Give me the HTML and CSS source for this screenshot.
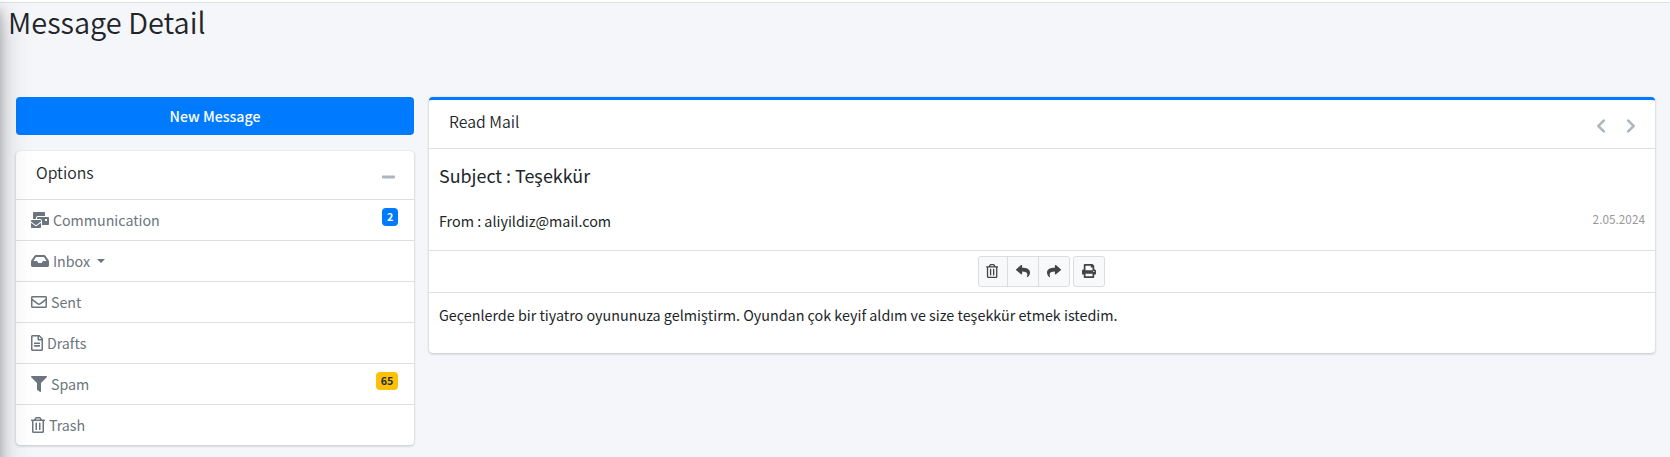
FILE: index.html
```html
<!DOCTYPE html>
<html lang="tr">
<head>
<meta charset="utf-8">
<title>Message Detail</title>
<link rel="stylesheet" href="styles.css">
</head>
<body>
<svg class="defs" width="0" height="0">
  <symbol id="trash" viewBox="0 0 448 512"><path d="M268 416h24a12 12 0 0 0 12-12V188a12 12 0 0 0-12-12h-24a12 12 0 0 0-12 12v216a12 12 0 0 0 12 12zM432 80h-82.41l-34-56.7A48 48 0 0 0 274.41 0H173.59a48 48 0 0 0-41.16 23.3L98.41 80H16A16 16 0 0 0 0 96v16a16 16 0 0 0 16 16h16v336a48 48 0 0 0 48 48h288a48 48 0 0 0 48-48V128h16a16 16 0 0 0 16-16V96a16 16 0 0 0-16-16zM171.84 50.91A6 6 0 0 1 177 48h94a6 6 0 0 1 5.15 2.91L293.61 80H154.39zM368 464H80V128h288zm-212-48h24a12 12 0 0 0 12-12V188a12 12 0 0 0-12-12h-24a12 12 0 0 0-12 12v216a12 12 0 0 0 12 12z"/></symbol>
  <symbol id="reply" viewBox="0 0 512 512"><path d="M8.309 189.836L184.313 37.851C199.719 24.546 224 35.347 224 56.015v80.053c160.629 1.839 288 34.032 288 186.258 0 61.441-39.581 122.309-83.333 154.132-13.653 9.931-33.111-2.533-28.077-18.631 45.344-145.012-21.507-183.51-176.59-185.742V360c0 20.7-24.3 31.453-39.687 18.164l-176.004-152c-11.071-9.562-11.086-26.753 0-36.328z"/></symbol>
  <symbol id="chevron" viewBox="0 0 320 512"><path d="M34.52 239.03L228.87 44.69c9.37-9.37 24.57-9.37 33.94 0l22.67 22.67c9.36 9.36 9.37 24.52.04 33.9L131.49 256l154.02 154.75c9.34 9.38 9.32 24.54-.04 33.9l-22.67 22.67c-9.37 9.37-24.57 9.37-33.94 0L34.52 272.97c-9.37-9.37-9.37-24.57 0-33.94z"/></symbol>
</svg>
<div class="navbar-edge"></div>
<div class="sidebar-shadow"></div>
<h1 class="page-title">Message Detail</h1>
<main class="content">
  <aside class="side">
    <a class="compose">New Message</a>
    <section class="card options">
      <header class="card-header">
        <h3 class="card-title">Options</h3>
        <svg class="tool minus" viewBox="0 0 448 512" width="13" height="16"><path d="M416 208H32c-17.67 0-32 14.33-32 32v32c0 17.67 14.33 32 32 32h384c17.67 0 32-14.33 32-32v-32c0-17.67-14.33-32-32-32z"/></svg>
      </header>
      <ul class="nav">
        <li class="nav-item"><svg viewBox="0 0 576 512" width="18" height="16"><path d="M160 448c-25.6 0-51.2-22.4-64-32-64-44.8-83.2-60.8-96-70.4V480c0 17.67 14.33 32 32 32h256c17.67 0 32-14.33 32-32V345.6c-12.8 9.6-32 25.6-96 70.4-12.8 9.6-38.4 32-64 32zm128-192H32c-17.67 0-32 14.33-32 32v16c25.6 19.2 22.4 19.2 115.2 86.4 9.6 6.4 28.8 25.6 44.8 25.6s35.2-19.2 44.8-22.4c92.8-67.2 89.6-67.2 115.2-86.4V288c0-17.67-14.33-32-32-32zm256-96H224c-17.67 0-32 14.33-32 32v32h96c33.21 0 60.59 25.42 63.71 57.82l.29-.22V416h192c17.67 0 32-14.33 32-32V192c0-17.67-14.33-32-32-32zm-32 128h-64v-64h64v64zm-352-96c0-35.29 28.71-64 64-64h224V32c0-17.67-14.33-32-32-32H96C78.33 0 64 14.33 64 32v192h96v-32z"/></svg><span>Communication</span><b class="badge primary">2</b></li>
        <li class="nav-item"><svg viewBox="0 0 576 512" width="18" height="16"><path d="M567.938 243.908L462.25 85.374A48.003 48.003 0 0 0 422.311 64H153.689a48 48 0 0 0-39.938 21.374L8.062 243.908A47.994 47.994 0 0 0 0 270.533V400c0 26.51 21.49 48 48 48h480c26.51 0 48-21.49 48-48V270.533a47.994 47.994 0 0 0-8.062-26.625zM162.252 128h251.497l85.333 128H376l-32 64H232l-32-64H76.918l85.334-128z"/></svg><span>Inbox</span><i class="caret"></i></li>
        <li class="nav-item"><svg viewBox="0 0 512 512" width="16" height="16"><path d="M464 64H48C21.49 64 0 85.49 0 112v288c0 26.51 21.49 48 48 48h416c26.51 0 48-21.49 48-48V112c0-26.51-21.49-48-48-48zm0 48v40.805c-22.422 18.259-58.168 46.651-134.587 106.49-16.841 13.247-50.201 45.072-73.413 44.701-23.208.375-56.579-31.459-73.413-44.701C106.18 199.465 70.425 171.067 48 152.805V112h416zM48 400V214.398c22.914 18.251 55.409 43.862 104.938 82.646 21.857 17.205 60.134 55.186 103.062 54.955 42.717.231 80.509-37.199 103.053-54.947 49.528-38.783 82.032-64.401 104.947-82.653V400H48z"/></svg><span>Sent</span></li>
        <li class="nav-item"><svg viewBox="0 0 384 512" width="12" height="16"><path d="M288 248v28c0 6.6-5.4 12-12 12H108c-6.6 0-12-5.4-12-12v-28c0-6.6 5.4-12 12-12h168c6.6 0 12 5.4 12 12zm-12 72H108c-6.6 0-12 5.4-12 12v28c0 6.6 5.4 12 12 12h168c6.6 0 12-5.4 12-12v-28c0-6.6-5.4-12-12-12zm108-188.1V464c0 26.5-21.5 48-48 48H48c-26.5 0-48-21.5-48-48V48C0 21.5 21.5 0 48 0h204.1C264.8 0 277 5.1 286 14.1L369.9 98c9 8.9 14.1 21.2 14.1 33.9zm-128-80V128h76.1L256 51.9zM336 464V176H232c-13.3 0-24-10.7-24-24V48H48v416h288z"/></svg><span>Drafts</span></li>
        <li class="nav-item"><svg viewBox="0 0 512 512" width="16" height="16"><path d="M487.976 0H24.028C2.71 0-8.047 25.866 7.058 40.971L192 225.941V432c0 7.831 3.821 15.17 10.237 19.662l80 55.98C298.02 518.69 320 507.493 320 487.98V225.941l184.947-184.97C520.021 25.896 509.338 0 487.976 0z"/></svg><span>Spam</span><b class="badge warning">65</b></li>
        <li class="nav-item"><svg width="14" height="16"><use href="#trash"/></svg><span>Trash</span></li>
      </ul>
    </section>
  </aside>
  <section class="card mail">
    <header class="card-header">
      <h3 class="card-title">Read Mail</h3>
      <div class="pager">
        <svg class="tool" width="10" height="16"><use href="#chevron"/></svg>
        <svg class="tool flip" width="10" height="16"><use href="#chevron"/></svg>
      </div>
    </header>
    <div class="info">
      <h5 class="subject">Subject : Teşekkür</h5>
      <div class="from"><span>From : aliyildiz@mail.com</span><time>2.05.2024</time></div>
    </div>
    <div class="controls">
      <div class="group">
        <a class="btn first"><svg width="12.25" height="14"><use href="#trash"/></svg></a>
        <a class="btn"><svg width="14" height="14"><use href="#reply"/></svg></a>
        <a class="btn"><svg class="flip" width="14" height="14"><use href="#reply"/></svg></a>
      </div>
      <a class="btn solo"><svg viewBox="0 0 512 512" width="14" height="14"><path d="M448 192V77.25c0-8.49-3.37-16.62-9.37-22.63L393.37 9.37c-6-6-14.14-9.37-22.63-9.37H96C78.33 0 64 14.33 64 32v160c-35.35 0-64 28.65-64 64v112c0 8.84 7.16 16 16 16h48v96c0 17.67 14.33 32 32 32h320c17.67 0 32-14.33 32-32v-96h48c8.84 0 16-7.16 16-16V256c0-35.35-28.65-64-64-64zm-64 256H128v-96h256v96zm0-224H128V64h192v48c0 8.84 7.16 16 16 16h48v96zm48 72c-13.25 0-24-10.75-24-24 0-13.26 10.75-24 24-24s24 10.74 24 24c0 13.25-10.75 24-24 24z"/></svg></a>
    </div>
    <p class="message">Geçenlerde bir tiyatro oyununuza gelmiştirm. Oyundan çok keyif aldım ve size teşekkür etmek istedim.</p>
  </section>
</main>
</body>
</html>
```

FILE: styles.css
```css
* { box-sizing: border-box; }
body {
  margin: 0;
  height: 457px;
  overflow: hidden;
  position: relative;
  background: #f4f6f9;
  color: #212529;
  font-family: "Source Sans Pro", "Noto Sans CJK SC", "Noto Sans", sans-serif;
  font-size: 14.33px;
  line-height: 24px;
}
h1, h3, h5, p, ul { margin: 0; padding: 0; font-weight: 400; }
svg { fill: currentColor; flex: none; display: block; }
.defs { position: absolute; }
.navbar-edge { height: 3px; background: #fff; border-bottom: 1px solid #dee2e6; }
.sidebar-shadow {
  position: absolute;
  z-index: 5;
  left: -250px;
  top: 0;
  width: 250px;
  height: 600px;
  box-shadow: 0 14px 28px rgba(0,0,0,.25), 0 10px 10px rgba(0,0,0,.22);
}
.page-title { padding-left: 8px; font-size: 28.95px; font-weight: 350; line-height: 36px; height: 94px; }
.content { display: flex; align-items: flex-start; gap: 15px; padding: 0 15px 0 16px; }
.side { width: 398px; flex: none; }
.compose {
  display: block;
  height: 38px;
  margin-bottom: 16px;
  border-radius: 4px;
  background: #007bff;
  color: #fff;
  text-align: center;
  font-size: 14.2px;
  font-weight: 500;
  line-height: 38px;
}
.card {
  background: #fff;
  border-radius: 4px;
  box-shadow: 0 0 1px rgba(0,0,0,.125), 0 1px 3px rgba(0,0,0,.2);
}
.card-header {
  display: flex;
  justify-content: space-between;
  height: 49px;
  padding: 9px 19px 0 20px;
  border-bottom: 1px solid #dfdfdf;
}
.card-title { font-size: 15.8px; font-weight: 350; line-height: 26px; }
.tool { color: #adb5bd; }
.minus { margin-top: 9px; }
.nav { list-style: none; }
.nav-item {
  display: flex;
  align-items: center;
  height: 41px;
  padding: 0 16px 0 15.4px;
  border-bottom: 1px solid #dfdfdf;
  color: #6c757d;
  font-size: 14.25px;
}
.nav-item:last-child { height: 40px; border-bottom: 0; }
.nav-item span { margin-left: 3.5px; }
.caret { margin: 0 0 0 7px; border: 4.5px solid transparent; border-top-color: currentColor; border-bottom: 0; }
.badge {
  align-self: flex-start;
  margin: 8px 0 0 auto;
  height: 18px;
  padding: 0 4.7px;
  border-radius: 4px;
  font-size: 10.7px;
  line-height: 18px;
  font-weight: 700;
}
.primary { background: #007bff; color: #fff; }
.warning { background: #ffc107; color: #1f2d3d; }
.mail { flex: 1; height: 256px; border-top: 3px solid #007bff; }
.pager { display: flex; gap: 20px; padding-top: 9px; }
.flip { transform: scaleX(-1); }
.info { height: 102px; padding: 14px 10px 0 10px; border-bottom: 1px solid #dfdfdf; }
.subject { font-size: 17.9px; line-height: 24px; }
.from { display: flex; justify-content: space-between; margin-top: 22px; }
.from time { color: #999; font-size: 11.8px; line-height: 20px; }
.controls {
  display: flex;
  align-items: center;
  justify-content: center;
  gap: 3px;
  height: 42px;
  padding: 0 2px 1px 0;
  border-bottom: 1px solid #dfdfdf;
}
.group { display: flex; }
.btn {
  display: flex;
  align-items: center;
  justify-content: center;
  width: 32px;
  height: 31px;
  margin-left: -1px;
  border: 1px solid #ddd;
  background: #f8f9fa;
  color: #444;
}
.first { width: 30px; margin: 0; border-radius: 3px 0 0 3px; }
.group .btn:last-child { border-radius: 0 3px 3px 0; }
.solo { margin: 0; border-radius: 3px; }
.message { padding: 10px 10px; }
```
